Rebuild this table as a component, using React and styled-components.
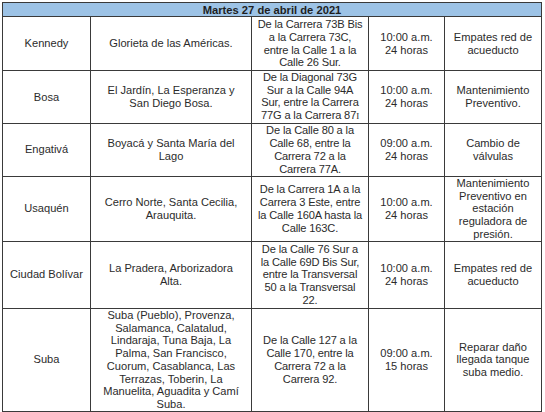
import React from 'react'
import styled, { createGlobalStyle } from 'styled-components'

const GlobalStyle = createGlobalStyle`
  html, body {
    margin: 0;
    padding: 0;
    background: #fff;
  }
  body {
    font-family: "Liberation Sans", Arial, sans-serif;
    color: #2b2b2b;
  }
`

const Page = styled.div`
  padding: 2px 0 0 2px;
`

const Table = styled.table`
  border-collapse: collapse;
  table-layout: fixed;
  width: 539px;
  font-size: 11.1px;
  line-height: 12.7px;

  td, th {
    border: 1px solid #3a3a3a;
    text-align: center;
    vertical-align: middle;
    padding: 0;
    overflow: hidden;
  }
`

const HeadCell = styled.th`
  background: #9dc3e6;
  font-weight: bold;
  height: 13px;
  line-height: 12px;
  font-size: 11.2px;
  color: #1f1f1f;
`

const Row = styled.tr`
  height: ${p => p.$h}px;
`

const Cell = styled.td`
  white-space: nowrap;
  letter-spacing: ${p => (p.$tight ? '-0.15px' : '0')};
`

const SerifI = styled.span`
  font-family: "Liberation Serif", serif;
  font-size: 9px;
`

const rows = [
  {
    h: 54,
    loc: 'Kennedy',
    barrios: ['Glorieta de las Américas.'],
    sector: ['De la Carrera 73B Bis', 'a la Carrera 73C,', 'entre la Calle 1 a la', 'Calle 26 Sur.'],
    hora: ['10:00 a.m.', '24 horas'],
    motivo: ['Empates red de', 'acueducto'],
  },
  {
    h: 52,
    loc: 'Bosa',
    barrios: ['El Jardín, La Esperanza y', 'San Diego Bosa.'],
    sector: ['De la Diagonal 73G', 'Sur a la Calle 94A', 'Sur, entre la Carrera', <>77G a la Carrera 87<SerifI>I</SerifI></>],
    hora: ['10:00 a.m.', '24 horas'],
    motivo: ['Mantenimiento', 'Preventivo.'],
  },
  {
    h: 53,
    loc: 'Engativá',
    barrios: ['Boyacá y Santa María del', 'Lago'],
    sector: ['De la Calle 80 a la', 'Calle 68, entre la', 'Carrera 72 a la', 'Carrera 77A.'],
    hora: ['09:00 a.m.', '24 horas'],
    motivo: ['Cambio de', 'válvulas'],
  },
  {
    h: 65,
    loc: 'Usaquén',
    barrios: ['Cerro Norte, Santa Cecilia,', 'Arauquita.'],
    sector: ['De la Carrera 1A a la', 'Carrera 3 Este, entre', 'la Calle 160A hasta la', 'Calle 163C.'],
    hora: ['10:00 a.m.', '24 horas'],
    motivo: ['Mantenimiento', 'Preventivo en', 'estación', 'reguladora de', 'presión.'],
  },
  {
    h: 67,
    loc: 'Ciudad Bolívar',
    barrios: ['La Pradera, Arborizadora', 'Alta.'],
    sector: ['De la Calle 76 Sur a', 'la Calle 69D Bis Sur,', 'entre la Transversal', '50 a la Transversal', '22.'],
    hora: ['10:00 a.m.', '24 horas'],
    motivo: ['Empates red de', 'acueducto'],
  },
  {
    h: 103,
    loc: 'Suba',
    barrios: [
      'Suba (Pueblo), Provenza,',
      'Salamanca, Calatalud,',
      'Lindaraja, Tuna Baja, La',
      'Palma, San Francisco,',
      'Cuorum, Casablanca, Las',
      'Terrazas, Toberin, La',
      'Manuelita, Aguadita y Camí',
      'Suba.',
    ],
    sector: ['De la Calle 127 a la', 'Calle 170, entre la', 'Carrera 72 a la', 'Carrera 92.'],
    hora: ['09:00 a.m.', '15 horas'],
    motivo: ['Reparar daño', 'llegada tanque', 'suba medio.'],
  },
]

function Lines({ items }) {
  return items.map((t, i) => (
    <React.Fragment key={i}>
      {i > 0 && <br />}
      {t}
    </React.Fragment>
  ))
}

export default function App() {
  return (
    <Page>
      <GlobalStyle />
      <Table>
        <colgroup>
          <col style={{ width: 88 }} />
          <col style={{ width: 161 }} />
          <col style={{ width: 117 }} />
          <col style={{ width: 76 }} />
          <col style={{ width: 97 }} />
        </colgroup>
        <thead>
          <tr>
            <HeadCell colSpan={5}>Martes 27 de abril de 2021</HeadCell>
          </tr>
        </thead>
        <tbody>
          {rows.map(r => (
            <Row key={r.loc} $h={r.h}>
              <Cell>{r.loc}</Cell>
              <Cell><Lines items={r.barrios} /></Cell>
              <Cell $tight><Lines items={r.sector} /></Cell>
              <Cell><Lines items={r.hora} /></Cell>
              <Cell><Lines items={r.motivo} /></Cell>
            </Row>
          ))}
        </tbody>
      </Table>
    </Page>
  )
}
